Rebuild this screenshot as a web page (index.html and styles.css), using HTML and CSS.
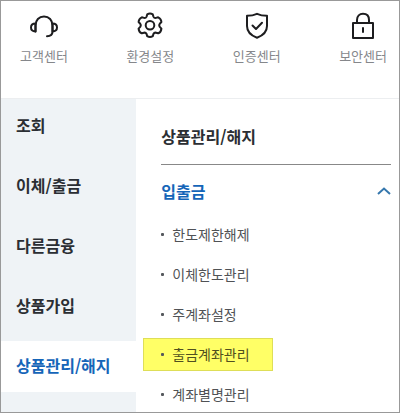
FILE: index.html
```html
<!DOCTYPE html>
<html lang="ko">
<head>
    <meta charset="UTF-8">
    <meta name="viewport" content="width=device-width, initial-scale=1.0">
    <title>상품관리/해지</title>
    <link rel="stylesheet" href="styles.css">
</head>
<body>
    <div class="app">
        <nav class="quick">
            <a href="#">
                <svg class="icon" viewBox="0 0 28 28">
                    <path d="M5.500 19.500V13.500C5.500 8 9 4.500 14 4.500S22.500 8 22.500 13.500V19.500C22.500 22.500 20.500 24.200 17 24.200"/>
                    <path d="M5.500 11.500C2.500 11.500 1 13.300 1 15.500S2.500 19.300 5.500 19.500Z"/>
                    <path d="M22.500 11.500C25.500 11.500 27 13.300 27 15.500S25.500 19.300 22.500 19.500Z"/>
                </svg>
                <span>고객센터</span>
            </a>
            <a href="#">
                <svg class="icon" viewBox="0 0 28 28">
                    <path d="M11.200 2.400Q14 .6 16.800 2.400L17.400 4.600Q18.300 6.300 20 5.900L22.200 5.300Q25.200 6.600 25.400 10L23.800 11.700Q22.700 13.300 23.800 14.900L25.400 16.600Q25.200 20 22.200 21.300L20 20.700Q18.300 20.300 17.400 22L16.800 24.200Q14 26 11.200 24.200L10.600 22Q9.700 20.300 8 20.700L5.800 21.300Q2.800 20 2.600 16.600L4.200 14.900Q5.300 13.300 4.200 11.700L2.600 10Q2.800 6.600 5.800 5.300L8 5.900Q9.700 6.300 10.600 4.600Z"/>
                    <circle cx="14" cy="13.300" r="4.300"/>
                </svg>
                <span>환경설정</span>
            </a>
            <a href="#">
                <svg class="icon" viewBox="0 0 28 28">
                    <path d="M14 1.800C17 3.200 20.500 3.800 24 3.800V14C24 20 20 23.500 14 25.700C8 23.500 4 20 4 14V3.800C7.500 3.800 11 3.200 14 1.800Z"/>
                    <path d="M9.500 13.500L13 17L19 10.800"/>
                </svg>
                <span>인증센터</span>
            </a>
            <a href="#">
                <svg class="icon" viewBox="0 0 28 28">
                    <path d="M4 11H24V26H4Z"/>
                    <path d="M8 11V8C8 4 10.500 1.800 14 1.800S20 4 20 8V11M14 16V20"/>
                </svg>
                <span>보안센터</span>
            </a>
        </nav>

        <div class="menu">
            <nav class="side">
                <a href="#">조회</a>
                <a href="#">이체/출금</a>
                <a href="#">다른금융</a>
                <a href="#">상품가입</a>
                <a class="active" href="#">상품관리/해지</a>
            </nav>

            <main class="content">
                <h1 class="title">상품관리/해지</h1>
                <button class="group" type="button" aria-expanded="true">
                    입출금
                    <svg class="arrow" viewBox="0 0 14 8">
                        <path d="M1 7L7 1.500L13 7"/>
                    </svg>
                </button>
                <ul class="links">
                    <li><a href="#">한도제한해제</a></li>
                    <li><a href="#">이체한도관리</a></li>
                    <li><a href="#">주계좌설정</a></li>
                    <li><a class="marked" href="#">출금계좌관리</a></li>
                    <li><a href="#">계좌별명관리</a></li>
                </ul>
            </main>
        </div>
    </div>
</body>
</html>
```
FILE: styles.css
```css
* {
    box-sizing: border-box;
}

body {
    margin: 0;
    font-family: "Noto Sans CJK KR", sans-serif;
    background-color: #fff;
    color: #2b2e33;
}

a {
    color: inherit;
    text-decoration: none;
}

.app {
    display: flex;
    flex-direction: column;
    min-height: 100vh;
    border: 1px solid #999;
}

/* Shortcut icons at the top */
.quick {
    display: flex;
    justify-content: space-between;
    padding: 11px 12px 32px 19px;
    border-bottom: 1px solid #eceef0;
}

.quick a {
    display: flex;
    flex-direction: column;
    align-items: center;
    gap: 6px;
    font-size: 13px;
    line-height: 20px;
    color: #85878b;
}

.icon {
    width: 28px;
    height: 28px;
    fill: none;
    stroke: #1d1d1f;
    stroke-width: 2;
    stroke-linecap: round;
    stroke-linejoin: round;
}

/* Side menu and content */
.menu {
    display: flex;
    flex: 1;
}

.side {
    display: flex;
    flex-direction: column;
    gap: 9px;
    flex: 0 0 34%;
    padding-top: 2px;
    background-color: #eff3f6;
}

.side a {
    padding: 12px 15px 15px;
    font-size: 16px;
    line-height: 24px;
    font-weight: 700;
}

.side .active {
    background-color: #fff;
    color: #1565b8;
}

.content {
    flex: 1;
    padding: 25px 8px 0 7px;
}

.title {
    margin: 0 0 0 18px;
    padding-bottom: 16px;
    border-bottom: 1px solid #888;
    font-size: 16px;
    line-height: 24px;
    font-weight: 700;
}

.group {
    display: flex;
    justify-content: space-between;
    align-items: center;
    width: 100%;
    padding: 14px 0 15px 18px;
    border: none;
    background: none;
    font-family: inherit;
    font-size: 16px;
    line-height: 24px;
    font-weight: 700;
    color: #1565b8;
    cursor: pointer;
}

.arrow {
    width: 14px;
    height: 8px;
    fill: none;
    stroke: #3577ad;
    stroke-width: 2;
}

.links {
    display: flex;
    flex-direction: column;
    gap: 7px;
    margin: 0;
    padding: 0;
    list-style: none;
}

.links li {
    display: flex;
}

.links a {
    display: flex;
    align-items: center;
    gap: 8px;
    padding: 5px 22px 6px 17px;
    border: 1px solid transparent;
    font-size: 14px;
    line-height: 20px;
    color: #505255;
}

.links a::before {
    content: "";
    width: 3px;
    height: 3px;
    border-radius: 1px;
    background-color: #55585c;
}

.links .marked {
    border-color: #dede58;
    background-color: #ffff66;
    color: #504f20;
}
```
